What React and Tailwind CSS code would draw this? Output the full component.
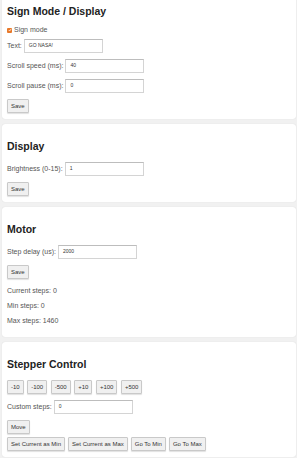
import React from "react";

const font = { fontFamily: '"Liberation Sans", Arial, sans-serif' };

const Btn = ({ children }) => (
  <button className="h-[14px] px-[3px] text-[6px] leading-none text-[#333] bg-[#f0f0f0] border border-[#c9c9c9] rounded-[1px] shadow-[0_1px_1px_rgba(0,0,0,0.12)]">
    {children}
  </button>
);

const Field = ({ label, value }) => (
  <div className="flex items-center gap-[2px]">
    <span className="text-[7px] text-[#555]">{label}</span>
    <div className="w-[79px] h-[14px] bg-white border border-[#d4d4d4] border-t-[#bdbdbd] flex items-center pl-[4px] text-[5px] text-[#333]">
      {value}
    </div>
  </div>
);

const Card = ({ title, children }) => (
  <section className="ml-[2px] mr-[1px] bg-white rounded-[3px] shadow-[0_0_1px_rgba(0,0,0,0.15)] pt-[16px] pb-[6px] px-[5px]">
    <h2 className="text-[10.5px] leading-[12px] font-bold text-[#222] mb-[10px]">{title}</h2>
    <div className="flex flex-col gap-[6px] items-start">{children}</div>
  </section>
);

export default function App() {
  return (
    <div className="min-h-[458px] bg-[#f1f1f1] overflow-hidden" style={font}>
      <div className="-mt-[11px] flex flex-col gap-[5px]">
        <Card title="Sign Mode / Display">
          <div className="flex items-center gap-[2px] h-[6px]">
            <span className="w-[5px] h-[5px] bg-[#e8792a] rounded-[1px] flex items-center justify-center">
              <svg viewBox="0 0 10 10" className="w-[4px] h-[4px]">
                <path d="M2 5 L4 7.5 L8 2.5" fill="none" stroke="white" strokeWidth="1.8" />
              </svg>
            </span>
            <span className="text-[7px] text-[#555]">Sign mode</span>
          </div>
          <Field label="Text:" value="GO NASA!" />
          <Field label="Scroll speed (ms):" value="40" />
          <Field label="Scroll pause (ms):" value="0" />
          <Btn>Save</Btn>
        </Card>

        <Card title="Display">
          <Field label="Brightness (0-15):" value="1" />
          <Btn>Save</Btn>
        </Card>

        <Card title="Motor">
          <Field label="Step delay (us):" value="2000" />
          <Btn>Save</Btn>
          <div className="flex flex-col gap-[7px] pt-[2px] pb-[6px] text-[7px] leading-[8px] text-[#555]">
            <p>Current steps: 0</p>
            <p>Min steps: 0</p>
            <p>Max steps: 1460</p>
          </div>
        </Card>

        <Card title="Stepper Control">
          <div className="flex gap-[3.5px]">
            <Btn>-10</Btn>
            <Btn>-100</Btn>
            <Btn>-500</Btn>
            <Btn>+10</Btn>
            <Btn>+100</Btn>
            <Btn>+500</Btn>
          </div>
          <Field label="Custom steps:" value="0" />
          <div className="flex flex-col gap-[3px] items-start">
            <Btn>Move</Btn>
            <div className="flex gap-[3px]">
              <Btn>Set Current as Min</Btn>
              <Btn>Set Current as Max</Btn>
              <Btn>Go To Min</Btn>
              <Btn>Go To Max</Btn>
            </div>
          </div>
        </Card>
      </div>
    </div>
  );
}
